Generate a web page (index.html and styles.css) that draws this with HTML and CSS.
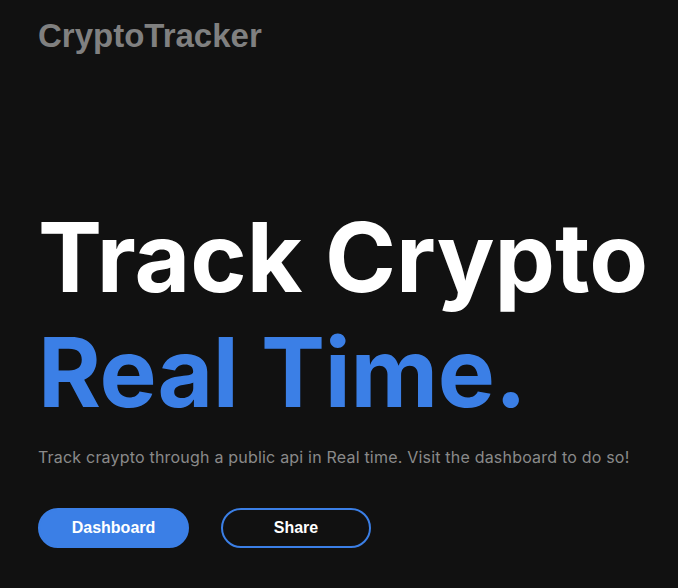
FILE: index.html
```html
<!DOCTYPE html>
<html>
<head>
<meta charset="utf-8">
<link rel="stylesheet" href="styles.css">
</head>
<body>
<div class="page">
  <header class="header">
    <div class="logo">CryptoTracker</div>
  </header>
  <main class="hero">
    <h1 class="title">
      <span class="line">Track Crypto</span>
      <span class="line accent">Real Time.</span>
    </h1>
    <p class="subtitle">Track craypto through a public api in Real time. Visit the dashboard to do so!</p>
    <div class="actions">
      <button class="btn btn-primary">Dashboard</button>
      <button class="btn btn-outline">Share</button>
    </div>
  </main>
</div>
</body>
</html>
```

FILE: styles.css
```css
html, body {
  margin: 0;
  padding: 0;
  background: #111111;
  overflow: hidden;
}
.page {
  padding: 0 0 0 38px;
  min-height: 588px;
  box-sizing: border-box;
}
.header {
  padding-top: 17px;
}
.logo {
  font-family: "Liberation Sans", Arial, sans-serif;
  font-weight: 700;
  font-size: 33px;
  line-height: 37px;
  color: #808080;
}
.hero {
  margin-top: 146px;
}
.title {
  margin: 0;
  font-family: Inter, sans-serif;
  font-weight: 700;
  font-size: 96px;
  line-height: 115px;
  color: #ffffff;
  white-space: nowrap;
}
.line {
  display: block;
}
.accent {
  color: #3b7fe6;
  letter-spacing: -0.3px;
}
.subtitle {
  margin: 15px 0 0;
  font-family: Inter, sans-serif;
  font-size: 16px;
  line-height: 24px;
  letter-spacing: 0.2px;
  color: #8a8a8a;
  white-space: nowrap;
}
.actions {
  display: flex;
  gap: 32px;
  margin-top: 39px;
}
.btn {
  font-family: "Liberation Sans", Arial, sans-serif;
  font-weight: 700;
  font-size: 16px;
  color: #ffffff;
  width: 151px;
  height: 40px;
  border-radius: 20px;
  cursor: pointer;
}
.btn-primary {
  background: #3b7fe6;
  border: 2px solid #3b7fe6;
}
.btn-outline {
  background: transparent;
  border: 2px solid #3b7fe6;
  width: 150px;
}
```
